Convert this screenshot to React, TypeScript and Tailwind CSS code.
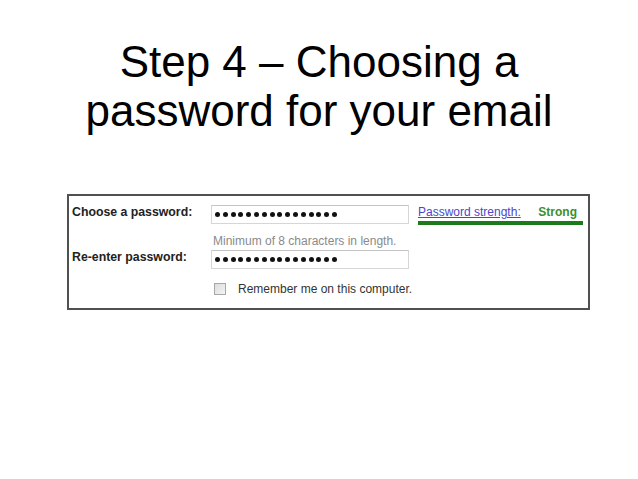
import React from "react";

function Dots() {
  return (
    <div className="flex items-center gap-[2.8px] pl-[3px]">
      {Array.from({ length: 16 }).map((_, i) => (
        <span key={i} className="block w-[5px] h-[5px] rounded-full bg-[#111]" />
      ))}
    </div>
  );
}

export default function App() {
  return (
    <div className="w-[638px] h-[479px] bg-white overflow-hidden" style={{ fontFamily: '"Liberation Sans", Arial, sans-serif' }}>
      <h1 className="pt-[37px] text-center text-[44px] leading-[49px] text-black font-normal">
        Step 4 – Choosing a<br />password for your email
      </h1>
      <div className="mt-[59px] ml-[67px] w-[523px] h-[116px] border-2 border-[#505050] pt-[9px] pl-[3px]">
        <div className="flex items-start">
          <div className="w-[139px] text-[12.3px] leading-[15px] font-bold text-[#222]">Choose a password:</div>
          <div className="w-[198px] h-[19px] border border-[#d6d6d6] border-t-[#c4c4c4] flex items-center">
            <Dots />
          </div>
          <div className="ml-[9px] w-[165px]">
            <div className="flex justify-between text-[12px] leading-[14px] pr-[6px]">
              <span className="text-[#4b46c8] underline">Password strength:</span>
              <span className="text-[#3b8f2e] font-bold">Strong</span>
            </div>
            <div className="mt-[2px] h-[3.5px] bg-[#1c7a1c]" />
          </div>
        </div>
        <div className="mt-[9px] ml-[141px] text-[12px] leading-[14px] text-[#8a8a8a]">Minimum of 8 characters in length.</div>
        <div className="mt-[2px] flex items-start">
          <div className="w-[139px] pt-[1px] text-[12.3px] leading-[13px] font-bold text-[#222]">Re-enter password:</div>
          <div className="w-[198px] h-[19px] border border-[#d6d6d6] border-t-[#c4c4c4] flex items-center">
            <Dots />
          </div>
        </div>
        <div className="mt-[13px] ml-[142px] flex items-center">
          <span className="block w-[12px] h-[12px] border border-[#a8a8a8] bg-gradient-to-br from-[#dcdcdc] to-[#f4f4f4]" />
          <span className="ml-[12px] text-[12px] leading-[14px] text-[#333]">Remember me on this computer.</span>
        </div>
      </div>
    </div>
  );
}
